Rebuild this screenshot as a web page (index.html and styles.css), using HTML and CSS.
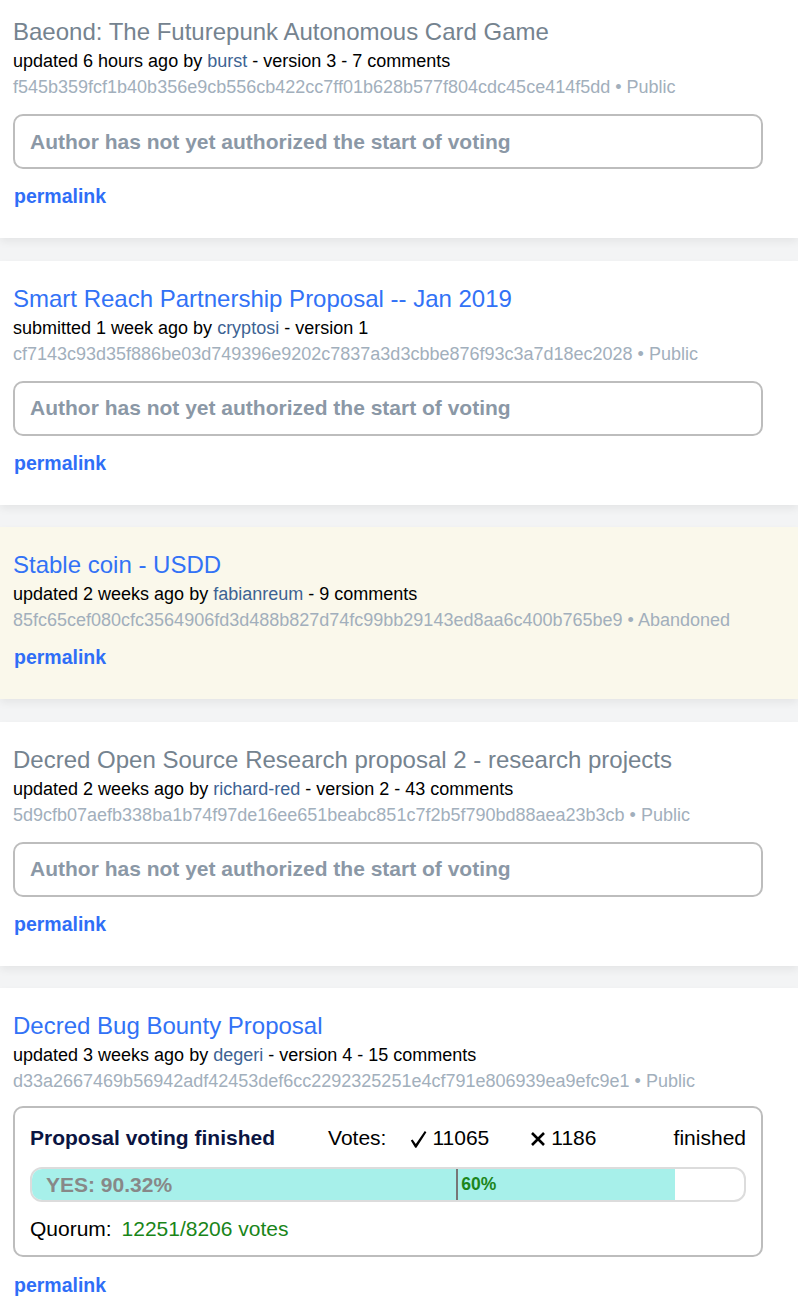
FILE: index.html
```html
<!DOCTYPE html>
<html lang="en">
<head>
<meta charset="utf-8">
<title>Proposals</title>
<link rel="stylesheet" href="styles.css">
</head>
<body>
<div class="list">

  <div class="card card-first">
    <a class="title title-visited" href="#">Baeond: The Futurepunk Autonomous Card Game</a>
    <div class="meta">updated 6 hours ago by <a class="author" href="#">burst</a> - version 3 - 7 comments</div>
    <div class="hash">f545b359fcf1b40b356e9cb556cb422cc7ff01b628b577f804cdc45ce414f5dd • Public</div>
    <div class="status">Author has not yet authorized the start of voting</div>
    <a class="permalink" href="#">permalink</a>
  </div>

  <div class="card">
    <a class="title" href="#">Smart Reach Partnership Proposal -- Jan 2019</a>
    <div class="meta">submitted 1 week ago by <a class="author" href="#">cryptosi</a> - version 1</div>
    <div class="hash">cf7143c93d35f886be03d749396e9202c7837a3d3cbbe876f93c3a7d18ec2028 • Public</div>
    <div class="status">Author has not yet authorized the start of voting</div>
    <a class="permalink" href="#">permalink</a>
  </div>

  <div class="card card-abandoned">
    <a class="title" href="#">Stable coin - USDD</a>
    <div class="meta">updated 2 weeks ago by <a class="author" href="#">fabianreum</a> - 9 comments</div>
    <div class="hash">85fc65cef080cfc3564906fd3d488b827d74fc99bb29143ed8aa6c400b765be9 • Abandoned</div>
    <a class="permalink" href="#">permalink</a>
  </div>

  <div class="card">
    <a class="title title-visited" href="#">Decred Open Source Research proposal 2 - research projects</a>
    <div class="meta">updated 2 weeks ago by <a class="author" href="#">richard-red</a> - version 2 - 43 comments</div>
    <div class="hash">5d9cfb07aefb338ba1b74f97de16ee651beabc851c7f2b5f790bd88aea23b3cb • Public</div>
    <div class="status">Author has not yet authorized the start of voting</div>
    <a class="permalink" href="#">permalink</a>
  </div>

  <div class="card card-last">
    <a class="title" href="#">Decred Bug Bounty Proposal</a>
    <div class="meta">updated 3 weeks ago by <a class="author" href="#">degeri</a> - version 4 - 15 comments</div>
    <div class="hash">d33a2667469b56942adf42453def6cc2292325251e4cf791e806939ea9efc9e1 • Public</div>
    <div class="vote">
      <div class="vote-head">
        <span class="vote-title">Proposal voting finished</span>
        <span class="votes-label">Votes:</span>
        <span class="vote-count yes">
          <svg class="icon-check" width="17" height="19" viewBox="0 0 17 19"><path d="M0.8 10.6 L2.6 9.4 L5.8 14 L14.8 1 L16.4 2.2 L6.4 17.8 L5.2 17.8 Z" fill="#000"/></svg>
          <span>11065</span>
        </span>
        <span class="vote-count no">
          <svg class="icon-x" width="16" height="16" viewBox="0 0 16 16"><path d="M2 2 L14 14 M14 2 L2 14" stroke="#000" stroke-width="2.6" fill="none"/></svg>
          <span>1186</span>
        </span>
        <span class="vote-state">finished</span>
      </div>
      <div class="bar">
        <div class="bar-fill" style="width: 90.32%"></div>
        <div class="bar-label">YES: 90.32%</div>
        <div class="bar-threshold" style="left: 60%"><span>60%</span></div>
      </div>
      <div class="quorum">Quorum: <span class="quorum-val">12251/8206 votes</span></div>
    </div>
    <a class="permalink permalink-vote" href="#">permalink</a>
  </div>

</div>
</body>
</html>
```

FILE: styles.css
```css
html, body {
  margin: 0;
  padding: 0;
}
body {
  background: #f3f4f5;
  font-family: "Liberation Sans", Arial, sans-serif;
  color: #000;
}
.list {
  display: flex;
  flex-direction: column;
  gap: 22.5px;
}
.card {
  background: #fff;
  padding: 25px 35px 31px 13px;
  box-shadow: 0 4px 8px rgba(0, 0, 0, 0.06);
  display: flex;
  flex-direction: column;
  align-items: flex-start;
}
.card-first {
  padding-top: 19px;
}
.card-abandoned {
  background: #faf8eb;
  padding-bottom: 31px;
}
.card-last {
  padding-bottom: 40px;
}
.title {
  font-size: 24px;
  line-height: 26px;
  color: #3272f6;
  text-decoration: none;
}
.title-visited {
  color: #75838f;
}
.meta {
  font-size: 18px;
  line-height: 26px;
  margin-top: 3px;
}
.author {
  color: #3d6393;
  text-decoration: none;
}
.hash {
  font-size: 18px;
  line-height: 26px;
  color: #a2afbc;
}
.status {
  align-self: stretch;
  box-sizing: border-box;
  height: 55px;
  margin: 14px 0 3px;
  border: 2px solid #bdbdbd;
  border-radius: 10px;
  padding: 0 15px;
  display: flex;
  align-items: center;
  font-size: 21px;
  font-weight: bold;
  color: #8b98a6;
}
.permalink {
  margin-top: 13px;
  font-size: 19.5px;
  line-height: 22px;
  font-weight: bold;
  color: #2f6ef7;
  text-decoration: none;
  padding-left: 1px;
}
.permalink-vote {
  margin-top: 17px;
}
.vote {
  align-self: stretch;
  box-sizing: border-box;
  height: 151px;
  margin-top: 12px;
  border: 2px solid #bdbdbd;
  border-radius: 10px;
  padding: 18px 15px 0;
}
.vote-head {
  display: flex;
  align-items: center;
  height: 24px;
  font-size: 21px;
}
.vote-title {
  font-weight: bold;
  color: #0b1542;
}
.votes-label {
  margin-left: 53px;
}
.vote-count {
  display: inline-flex;
  align-items: center;
  gap: 5px;
}
.yes {
  margin-left: 24px;
}
.no {
  margin-left: 41px;
}
.icon-check {
  margin-top: 2px;
}
.icon-x {
  margin-top: 2px;
}
.vote-state {
  margin-left: auto;
}
.bar {
  position: relative;
  margin-top: 17px;
  height: 35px;
  box-sizing: border-box;
  border: 2px solid #dcdcdc;
  border-radius: 12px;
  overflow: hidden;
  background: #fff;
}
.bar-fill {
  position: absolute;
  top: 0;
  bottom: 0;
  left: 0;
  background: #a7f0ea;
}
.bar-label {
  position: relative;
  padding-left: 14px;
  line-height: 31px;
  font-size: 21px;
  font-weight: bold;
  color: #888;
}
.bar-threshold {
  position: absolute;
  top: 0;
  bottom: 0;
  border-left: 2px solid #777;
  margin-left: -3px;
}
.bar-threshold span {
  position: absolute;
  left: 3px;
  top: 0;
  line-height: 31px;
  font-size: 17.5px;
  font-weight: bold;
  color: #1c861c;
}
.quorum {
  margin-top: 15px;
  font-size: 21px;
  line-height: 24px;
}
.quorum-val {
  color: #198519;
  margin-left: 4px;
}
```
